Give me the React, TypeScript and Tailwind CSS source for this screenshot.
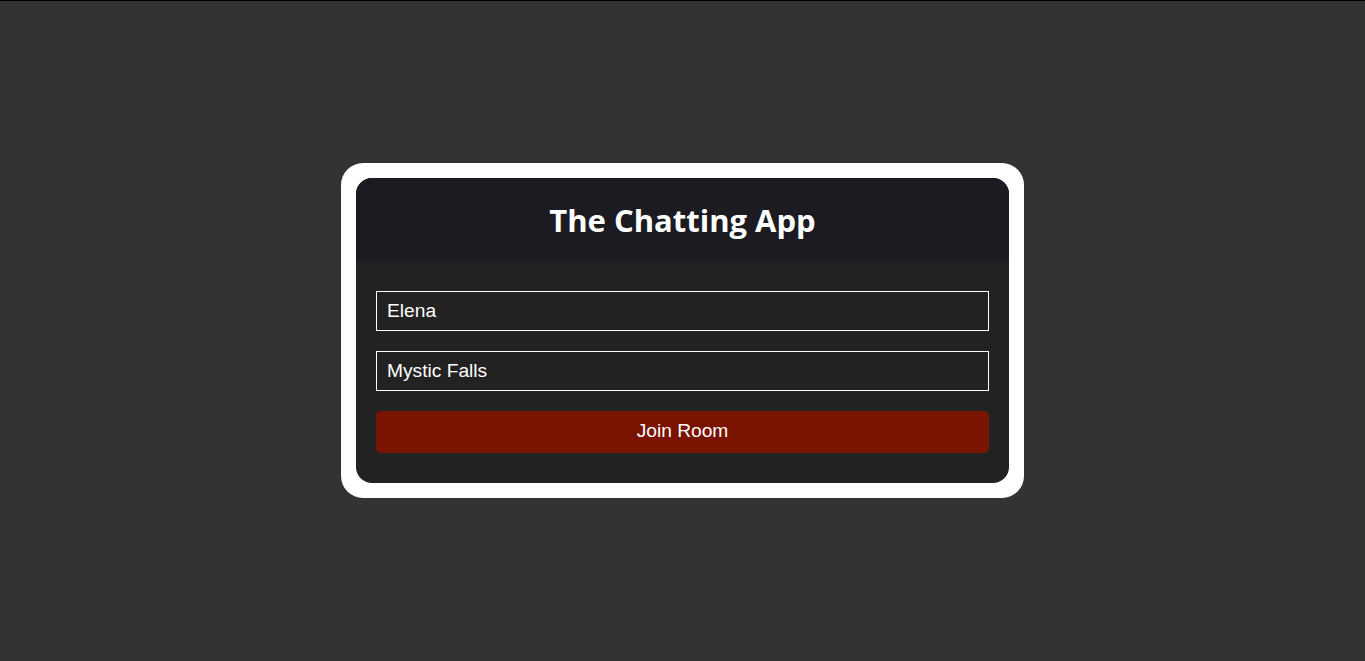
import React, { useEffect, useRef, useState } from 'react';

const App: React.FC = () => {
  const [name, setName] = useState('Elena');
  const [room, setRoom] = useState('Mystic Falls');
  const roomRef = useRef<HTMLInputElement>(null);

  useEffect(() => {
    const el = roomRef.current;
    if (el) {
      el.focus();
      el.setSelectionRange(el.value.length, el.value.length);
    }
  }, []);

  return (
    <div className="h-[661px] w-full bg-[#333333] border-t border-black pb-[2px] flex items-center justify-center">
      <div className="bg-white p-[15px] rounded-[22px]">
        <div className="w-[653px] rounded-[16px] overflow-hidden bg-[#222222]">
          <div className="h-[83px] pt-[3px] bg-[#1c1b21] flex items-center justify-center">
            <h1 className="text-white text-[31px] font-bold font-['Open_Sans',sans-serif]">
              The Chatting App
            </h1>
          </div>
          <div className="px-5 pt-[30px] pb-[30px] flex flex-col gap-5 font-['Liberation_Sans',Arial,sans-serif]">
            <input
              className="h-10 w-full bg-transparent border border-white px-[10px] text-white text-[19.2px] outline-none caret-white"
              value={name}
              onChange={(e) => setName(e.target.value)}
            />
            <input
              ref={roomRef}
              className="h-10 w-full bg-transparent border border-white px-[10px] text-white text-[19.2px] outline-none caret-white"
              value={room}
              onChange={(e) => setRoom(e.target.value)}
            />
            <button className="h-[42px] w-full bg-[#7a1300] rounded-[5px] text-white text-[19.2px]">
              Join Room
            </button>
          </div>
        </div>
      </div>
    </div>
  );
};

export default App;
